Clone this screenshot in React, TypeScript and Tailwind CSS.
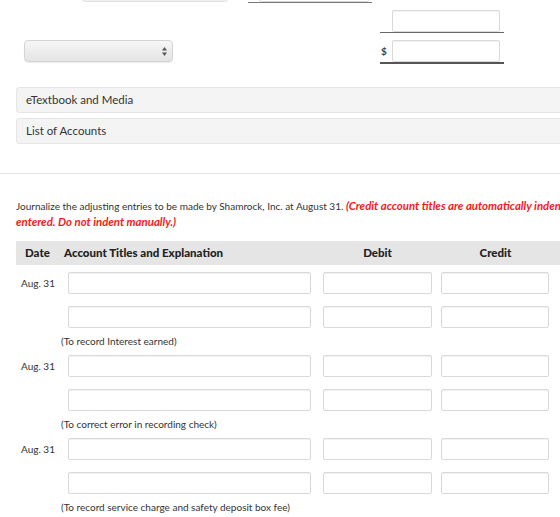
const inputCls =
  "block h-[22px] rounded-[2px] border border-[#d9d9d9] bg-white shadow-[inset_0_1px_1px_rgba(0,0,0,0.06)]";

type Entry = { note: string };

const entries: Entry[] = [
  { note: "(To record Interest earned)" },
  { note: "(To correct error in recording check)" },
  { note: "(To record service charge and safety deposit box fee)" },
];

const EntryRow = ({ date }: { date?: string }) => (
  <div className="flex items-center h-[22px]">
    <div className="w-[52px] pl-[5px] text-[10px]">{date}</div>
    <div className={`${inputCls} w-[243px]`} />
    <div className={`${inputCls} w-[109px] ml-[12px]`} />
    <div className={`${inputCls} w-[108px] ml-[9px]`} />
  </div>
);

const App = () => {
  return (
    <div
      className="w-[560px] h-[517px] overflow-hidden bg-white text-[#333]"
      style={{ fontFamily: "Lato, 'Open Sans', sans-serif" }}
    >
      <div className="w-[760px]">
        {/* Cropped row above */}
        <div className="flex items-end h-[3px]">
          <div className="ml-[82px] w-[146px] h-[22px] -mt-[20px] rounded-[3px] border border-[#e3e3e3] bg-[#f0f0f0] self-start" />
          <div className="ml-[20px] w-[124px] border-b border-[#777] self-start -mt-[20px]">
            <div className={`${inputCls} ml-[11px] w-[110px]`} />
          </div>
        </div>

        {/* Total row */}
        <div className="flex mt-[7px]">
          <div className="ml-[380px] w-[124px] border-b border-[#666]">
            <div className={`${inputCls} ml-[12px] w-[108px]`} />
          </div>
        </div>

        {/* Select + dollar row */}
        <div className="flex items-start mt-[7px]">
          <div className="ml-[24px] w-[149px] h-[22px] rounded-[4px] border border-[#d4d4d4] bg-gradient-to-b from-[#f6f6f6] to-[#e4e4e4] shadow-[0_1px_1px_rgba(0,0,0,0.08)] flex items-center justify-end pr-[5px]">
            <svg width="5" height="9" viewBox="0 0 5 9">
              <path d="M2.5 0 L5 3.5 H0 Z" fill="#555" />
              <path d="M2.5 9 L5 5.5 H0 Z" fill="#555" />
            </svg>
          </div>
          <div className="ml-[207px] w-[124px] border-b-2 border-[#555] flex items-center">
            <span className="w-[12px] text-[10px] font-bold text-[#444] pl-[1px]">$</span>
            <div className={`${inputCls} w-[108px]`} />
          </div>
        </div>

        {/* Accordions */}
        <div className="mt-[23px] ml-[16px] flex flex-col gap-[5px]">
          <div className="h-[26px] rounded-[3px] border border-[#e6e6e6] bg-[#f4f4f4] flex items-center pl-[9px] text-[11.5px]">
            eTextbook and Media
          </div>
          <div className="h-[26px] rounded-[3px] border border-[#e6e6e6] bg-[#f4f4f4] flex items-center pl-[9px] text-[11.5px]">
            List of Accounts
          </div>
        </div>

        <div className="mt-[29px] border-t border-[#e5e5e5]" />

        {/* Instructions */}
        <p className="mt-[24px] ml-[16px] text-[10px] leading-[16px]">
          Journalize the adjusting entries to be made by Shamrock, Inc. at August 31.{" "}
          <b className="italic text-[11.4px] text-[#ee1c25]">
            (Credit account titles are automatically indented when amount is
            <br />
            entered. Do not indent manually.)
          </b>
        </p>

        {/* Table */}
        <div className="mt-[11px] ml-[16px]">
          <div className="flex items-center h-[24px] bg-[#e5e5e5] text-[11.5px] font-black text-[#222]">
            <div className="w-[48px] pl-[9px]">Date</div>
            <div className="w-[259px]">Account Titles and Explanation</div>
            <div className="w-[109px] text-center">Debit</div>
            <div className="w-[109px] ml-[9px] text-center">Credit</div>
          </div>

          <div className="mt-[7px] flex flex-col">
            {entries.map((entry) => (
              <div key={entry.note} className="flex flex-col h-[83px]">
                <EntryRow date="Aug. 31" />
                <div className="mt-[12px]">
                  <EntryRow />
                </div>
                <div className="mt-[6px] ml-[45px] text-[10px]">{entry.note}</div>
              </div>
            ))}
          </div>
        </div>
      </div>
    </div>
  );
};

export default App;
